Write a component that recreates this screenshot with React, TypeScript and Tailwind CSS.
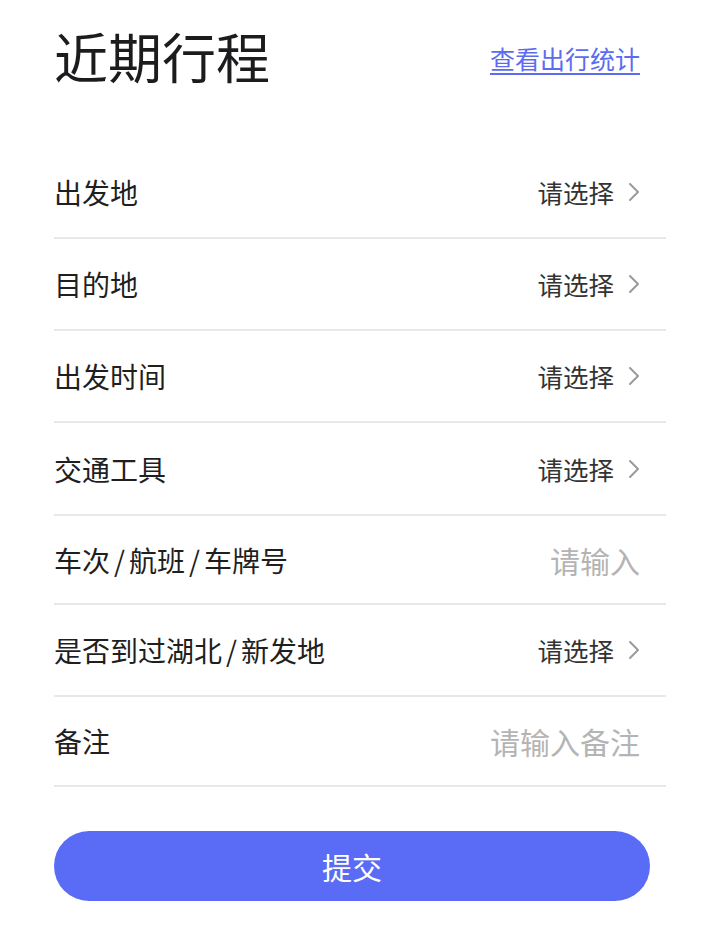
import React from 'react';

type Row = {
  label: string;
  kind: 'select' | 'input';
  placeholder: string;
  height: string;
};

const rows: Row[] = [
  { label: '出发地', kind: 'select', placeholder: '请选择', height: 'h-[92px]' },
  { label: '目的地', kind: 'select', placeholder: '请选择', height: 'h-[92px]' },
  { label: '出发时间', kind: 'select', placeholder: '请选择', height: 'h-[92px]' },
  { label: '交通工具', kind: 'select', placeholder: '请选择', height: 'h-[93px]' },
  { label: '车次/航班/车牌号', kind: 'input', placeholder: '请输入', height: 'h-[89px]' },
  { label: '是否到过湖北/新发地', kind: 'select', placeholder: '请选择', height: 'h-[92px]' },
  { label: '备注', kind: 'input', placeholder: '请输入备注', height: 'h-[90px]' },
];

const Chevron: React.FC = () => (
  <svg width="12" height="20" viewBox="0 0 12 20" className="ml-[14px]" fill="none">
    <path d="M2 2l8 8-8 8" stroke="#9a9a9a" strokeWidth="2" strokeLinecap="round" strokeLinejoin="round" />
  </svg>
);

// slashes in the labels sit a bit wider than the font gives them
const Label: React.FC<{ text: string }> = ({ text }) => {
  const parts = text.split('/');
  return (
    <span className="text-[28px] leading-none text-[#1f1f1f]">
      {parts.map((p, i) => (
        <React.Fragment key={i}>
          {i > 0 && <span className="mx-[4px]">/</span>}
          {p}
        </React.Fragment>
      ))}
    </span>
  );
};

const App: React.FC = () => {
  return (
    <main
      className="min-h-[935px] w-full bg-white pl-[54px] pr-[37px]"
      style={{ fontFamily: '"Noto Sans CJK SC", "Noto Sans", sans-serif' }}
    >
      {/* Header */}
      <div className="flex h-[116px] items-center justify-between pr-[26px]">
        <h1 className="-mt-[4px] text-[54px] font-normal leading-none text-[#1c1c1e]">近期行程</h1>
        <a href="#" className="text-[25px] leading-none text-[#5b6cf0] underline underline-offset-4">
          查看出行统计
        </a>
      </div>

      {/* Form rows */}
      <div className="mt-[31px]">
        {rows.map((row) => (
          <div
            key={row.label}
            className={`flex items-center justify-between border-b-2 border-[#e8e8e8] pr-[26px] ${row.height}`}
          >
            <Label text={row.label} />
            {row.kind === 'select' ? (
              <span className="flex items-center text-[25.5px] leading-none text-[#333333]">
                {row.placeholder}
                <Chevron />
              </span>
            ) : (
              <span className="text-[30px] leading-none text-[#b4b4b4]">{row.placeholder}</span>
            )}
          </div>
        ))}
      </div>

      {/* Submit */}
      <button className="mt-[44px] mr-[16px] flex h-[70px] w-[596px] items-center justify-center rounded-full bg-[#5a6cf6] text-[30px] text-white">
        提交
      </button>
    </main>
  );
};

export default App;
